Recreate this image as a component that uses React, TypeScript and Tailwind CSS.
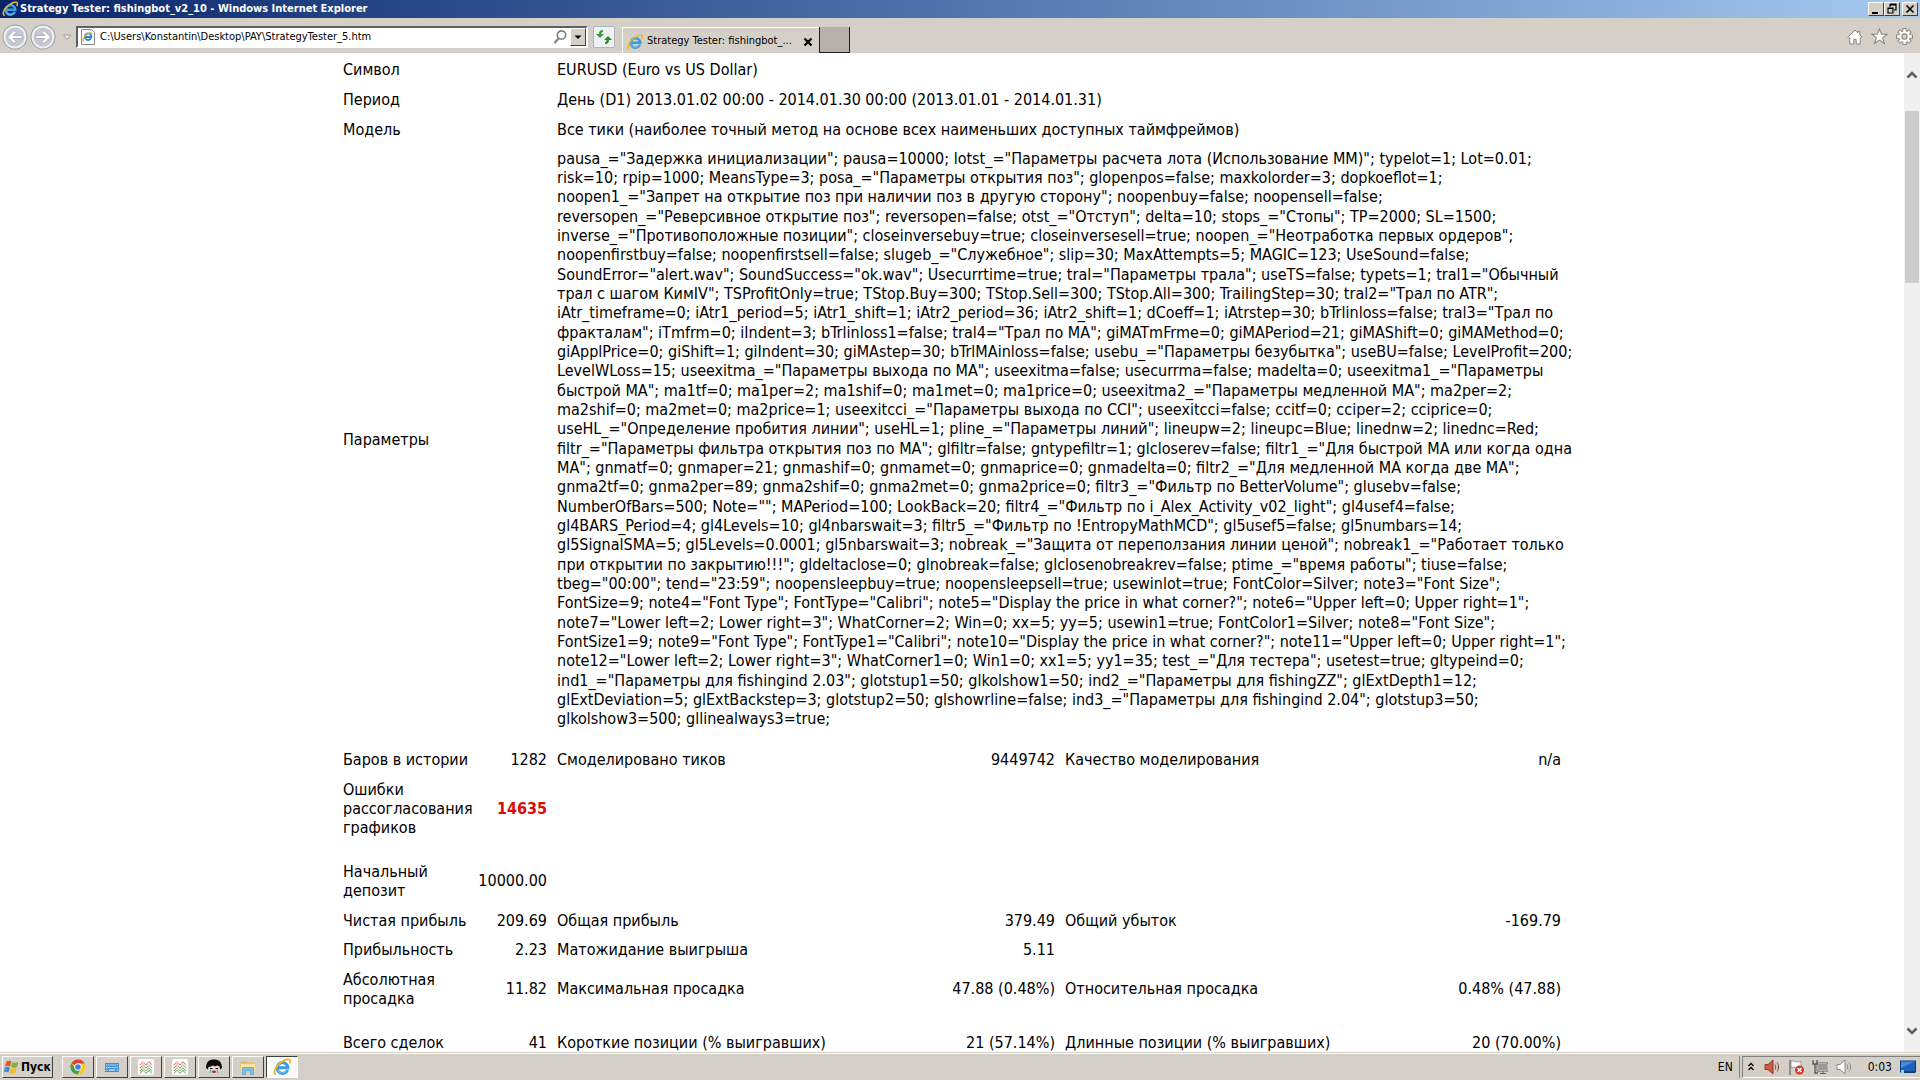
import type { ReactNode } from "react";

const params = [
  'pausa_="Задержка инициализации"; pausa=10000; lotst_="Параметры расчета лота (Использование MM)"; typelot=1; Lot=0.01;',
  'risk=10; rpip=1000; MeansType=3; posa_="Параметры открытия поз"; glopenpos=false; maxkolorder=3; dopkoeflot=1;',
  'noopen1_="Запрет на открытие поз при наличии поз в другую сторону"; noopenbuy=false; noopensell=false;',
  'reversopen_="Реверсивное открытие поз"; reversopen=false; otst_="Отступ"; delta=10; stops_="Стопы"; TP=2000; SL=1500;',
  'inverse_="Противоположные позиции"; closeinversebuy=true; closeinversesell=true; noopen_="Неотработка первых ордеров";',
  'noopenfirstbuy=false; noopenfirstsell=false; slugeb_="Служебное"; slip=30; MaxAttempts=5; MAGIC=123; UseSound=false;',
  'SoundError="alert.wav"; SoundSuccess="ok.wav"; Usecurrtime=true; tral="Параметры трала"; useTS=false; typets=1; tral1="Обычный',
  'трал с шагом КимIV"; TSProfitOnly=true; TStop.Buy=300; TStop.Sell=300; TStop.All=300; TrailingStep=30; tral2="Трал по ATR";',
  'iAtr_timeframe=0; iAtr1_period=5; iAtr1_shift=1; iAtr2_period=36; iAtr2_shift=1; dCoeff=1; iAtrstep=30; bTrlinloss=false; tral3="Трал по',
  'фракталам"; iTmfrm=0; iIndent=3; bTrlinloss1=false; tral4="Трал по МА"; giMATmFrme=0; giMAPeriod=21; giMAShift=0; giMAMethod=0;',
  'giApplPrice=0; giShift=1; giIndent=30; giMAstep=30; bTrlMAinloss=false; usebu_="Параметры безубытка"; useBU=false; LevelProfit=200;',
  'LevelWLoss=15; useexitma_="Параметры выхода по МА"; useexitma=false; usecurrma=false; madelta=0; useexitma1_="Параметры',
  'быстрой МА"; ma1tf=0; ma1per=2; ma1shif=0; ma1met=0; ma1price=0; useexitma2_="Параметры медленной МА"; ma2per=2;',
  'ma2shif=0; ma2met=0; ma2price=1; useexitcci_="Параметры выхода по CCI"; useexitcci=false; ccitf=0; cciper=2; cciprice=0;',
  'useHL_="Определение пробития линии"; useHL=1; pline_="Параметры линий"; lineupw=2; lineupc=Blue; linednw=2; linednc=Red;',
  'filtr_="Параметры фильтра открытия поз по МА"; glfiltr=false; gntypefiltr=1; glcloserev=false; filtr1_="Для быстрой МА или когда одна',
  'МА"; gnmatf=0; gnmaper=21; gnmashif=0; gnmamet=0; gnmaprice=0; gnmadelta=0; filtr2_="Для медленной МА когда две МА";',
  'gnma2tf=0; gnma2per=89; gnma2shif=0; gnma2met=0; gnma2price=0; filtr3_="Фильтр по BetterVolume"; glusebv=false;',
  'NumberOfBars=500; Note=""; MAPeriod=100; LookBack=20; filtr4_="Фильтр по i_Alex_Activity_v02_light"; gl4usef4=false;',
  'gl4BARS_Period=4; gl4Levels=10; gl4nbarswait=3; filtr5_="Фильтр по !EntropyMathMCD"; gl5usef5=false; gl5numbars=14;',
  'gl5SignalSMA=5; gl5Levels=0.0001; gl5nbarswait=3; nobreak_="Защита от переползания линии ценой"; nobreak1_="Работает только',
  'при открытии по закрытию!!!"; gldeltaclose=0; glnobreak=false; glclosenobreakrev=false; ptime_="время работы"; tiuse=false;',
  'tbeg="00:00"; tend="23:59"; noopensleepbuy=true; noopensleepsell=true; usewinlot=true; FontColor=Silver; note3="Font Size";',
  'FontSize=9; note4="Font Type"; FontType="Calibri"; note5="Display the price in what corner?"; note6="Upper left=0; Upper right=1";',
  'note7="Lower left=2; Lower right=3"; WhatCorner=2; Win=0; xx=5; yy=5; usewin1=true; FontColor1=Silver; note8="Font Size";',
  'FontSize1=9; note9="Font Type"; FontType1="Calibri"; note10="Display the price in what corner?"; note11="Upper left=0; Upper right=1";',
  'note12="Lower left=2; Lower right=3"; WhatCorner1=0; Win1=0; xx1=5; yy1=35; test_="Для тестера"; usetest=true; gltypeind=0;',
  'ind1_="Параметры для fishingind 2.03"; glotstup1=50; glkolshow1=50; ind2_="Параметры для fishingZZ"; glExtDepth1=12;',
  'glExtDeviation=5; glExtBackstep=3; glotstup2=50; glshowrline=false; ind3_="Параметры для fishingind 2.04"; glotstup3=50;',
  'glkolshow3=500; gllinealways3=true;',
];

const raised = "border border-t-white border-l-white border-r-[#404040] border-b-[#404040] bg-[#d4d0c8]";

function IeLogo({ className }: { className: string }) {
  return (
    <svg viewBox="0 0 16 16" className={className} aria-hidden="true">
      <path d="M13 10.600A4.800 4.800 0 1 1 13.300 8.700H5" fill="none" stroke="#3d9be0" strokeWidth="2.600" />
      <path d="M12.200 11A4.400 4.400 0 0 1 4 10" fill="none" stroke="#7cc4f2" strokeWidth="0.800" />
      <path d="M2.600 14.600C-.4 13 2 7.600 7 4c4-3 8-3.800 8.400-1.600.2.900-.2 1.800-.8 2.600" fill="none" stroke="#f2b51d" strokeWidth="1.500" />
    </svg>
  );
}

function NavButton({ label, flip }: { label: string; flip?: boolean }) {
  return (
    <button aria-label={label} className="size-[26px] shrink-0">
      <svg viewBox="0 0 26 26" className={flip ? "size-full rotate-180" : "size-full"}>
        <circle cx="13" cy="13" r="12.500" fill="#9a9da4" />
        <circle cx="13" cy="13" r="11.500" fill="#eef0f4" />
        <circle cx="13" cy="13" r="9.500" fill="#c3c8d2" />
        <path d="M5.500 13l6.500-6.500 2 2-3 3h9v3h-9l3 3-2 2z" fill="#fff" stroke="#a2a8b5" strokeWidth="0.800" />
      </svg>
    </button>
  );
}

function TitleBar() {
  return (
    <header className="flex h-[18px] items-center gap-[2px] bg-linear-to-r from-[#0a246a] to-[#a6caf0] pr-[2px] pl-[2px] text-white">
      <IeLogo className="size-4" />
      <h1 className="flex-1 text-[11px] leading-[18px] font-bold">
        Strategy Tester: fishingbot_v2_10 - Windows Internet Explorer
      </h1>
      <div className="flex text-black">
        <button aria-label="Minimize" className={`h-[14px] w-4 ${raised}`}>
          <svg viewBox="0 0 14 12" className="size-full"><path d="M3 9h6v2H3z" /></svg>
        </button>
        <button aria-label="Restore" className={`h-[14px] w-4 ${raised}`}>
          <svg viewBox="0 0 14 12" className="size-full">
            <path d="M5 1h6v6H9M5 1v3M5 2h6M3 5h5v5H3zM3 5.500h5" fill="none" stroke="#000" strokeWidth="1.200" />
          </svg>
        </button>
        <button aria-label="Close" className={`ml-[2px] h-[14px] w-4 ${raised}`}>
          <svg viewBox="0 0 14 12" className="size-full">
            <path d="M3.500 2.500l7 7M10.500 2.500l-7 7" stroke="#000" strokeWidth="1.700" />
          </svg>
        </button>
      </div>
    </header>
  );
}

function Toolbar() {
  return (
    <div className="flex h-[35px] items-center bg-[#d4d0c8] pt-[2px] pr-[7px] pl-[2px]">
      <nav className="flex items-center gap-[2px]">
        <NavButton label="Back" />
        <NavButton label="Forward" flip />
        <button aria-label="Recent pages" className="mx-[2px] w-[14px]">
          <svg viewBox="0 0 14 10" className="w-full"><path d="M3.500 3h7L7 7.500z" fill="#eee" stroke="#a5a199" /></svg>
        </button>
      </nav>
      <div className="flex h-[22px] w-[512px] items-center border-2 border-t-[#606060] border-r-white border-b-white border-l-[#606060] bg-white pl-[2px]">
        <svg viewBox="0 0 16 16" className="size-4 shrink-0" aria-hidden="true">
          <path d="M1.500.5h10l3 3v12h-13z" fill="#fff" stroke="#8a8a8a" />
          <path d="M11 9.300A3.300 3.300 0 1 1 11.400 8H5" fill="none" stroke="#2b86d6" strokeWidth="1.800" />
          <path d="M3.600 12.500c-2-1.500.6-5.500 4-7.500 2.600-1.500 4.600-1.600 4.400.2" fill="none" stroke="#eab021" strokeWidth="1.200" />
        </svg>
        <input
          aria-label="Address"
          type="text"
          defaultValue="C:\Users\Konstantin\Desktop\PAY\StrategyTester_5.htm"
          className="min-w-0 flex-1 bg-transparent pt-[2px] pl-1 text-[11px] text-black"
        />
        <button aria-label="Search" className="mr-[2px] size-4">
          <svg viewBox="0 0 16 16" className="size-full">
            <circle cx="9.500" cy="6" r="4.200" fill="#fff" stroke="#808080" strokeWidth="1.700" />
            <path d="M6.500 9.500L2.500 14" stroke="#808080" strokeWidth="2.200" />
          </svg>
        </button>
        <button aria-label="Show address list" className={`h-[18px] w-4 ${raised}`}>
          <svg viewBox="0 0 14 16" className="size-full"><path d="M3.500 6.500h7L7 10z" /></svg>
        </button>
      </div>
      <button aria-label="Refresh" className="ml-[5px] h-[22px] w-[22px] rounded-[2px] border border-[#b0b4bc] bg-[#eef0f4]">
        <svg viewBox="0 0 20 20" className="size-full">
          <path d="M9 3c-3 0-4 1.500-4 4H2l4 4 4-4H7.500c0-1.500.2-2 1.500-2z" fill="#3d9c3a" />
          <path d="M11 17c3 0 4-1.500 4-4h3l-4-4-4 4h2.500c0 1.500-.2 2-1.500 2z" fill="#2f8a2c" />
        </svg>
      </button>
      <div className="ml-[7px] flex h-[26px] w-[197px] items-center self-end border-t border-l border-white pt-[2px] pl-1">
        <IeLogo className="size-4 shrink-0" />
        <a href="#report" className="flex-1 pl-1 text-[11px] whitespace-nowrap text-black">
          Strategy Tester: fishingbot_...
        </a>
        <button aria-label="Close tab" className="mr-[6px] size-[10px]">
          <svg viewBox="0 0 10 10" className="size-full"><path d="M1.500 1.500l7 7M8.500 1.500l-7 7" stroke="#000" strokeWidth="2.200" /></svg>
        </button>
      </div>
      <button aria-label="New tab" className="h-[26px] w-[31px] self-end border-r border-b border-l border-[#202020] bg-[#b5b0a8]" />
      <div className="ml-auto flex items-center gap-2">
        <button aria-label="Home" className="size-4">
          <svg viewBox="0 0 16 16" className="size-full">
            <path d="M8 1L.8 8.200l1.200 1.200.8-.6V15h4v-4.500h2.400V15h4V8.800l.8.600 1.200-1.200-2.400-2.400V2.500h-2V4z" fill="#fff" stroke="#8a8781" />
          </svg>
        </button>
        <button aria-label="Favorites" className="size-[17px]">
          <svg viewBox="0 0 16 16" className="size-full">
            <path d="M8 .8l1.900 5h5.300l-4.200 3.300 1.600 5.500L8 11.400l-4.600 3.200L5 9.100.8 5.800h5.300z" fill="#fff" stroke="#8a8781" />
          </svg>
        </button>
        <button aria-label="Tools" className="size-[17px]">
          <svg viewBox="0 0 16 16" className="size-full">
            <path d="M8 0v16M0 8h16M2.500 2.500l11 11M13.500 2.500l-11 11" stroke="#8a8781" strokeWidth="4" />
            <circle cx="8" cy="8" r="5.500" fill="#8a8781" />
            <path d="M8 1v14M1 8h14M3.200 3.200l9.600 9.600M12.800 3.200l-9.600 9.600" stroke="#fff" strokeWidth="2.200" />
            <circle cx="8" cy="8" r="4.900" fill="#fff" />
            <circle cx="8" cy="8" r="2.500" fill="#d4d0c8" stroke="#8a8781" />
          </svg>
        </button>
      </div>
    </div>
  );
}

function Info({ label, children }: { label: string; children: ReactNode }) {
  return (
    <tr className="h-[30px]">
      <th scope="row" colSpan={2} className="px-[5px] text-left font-normal">{label}</th>
      <td colSpan={4} className="px-[5px] whitespace-nowrap">{children}</td>
    </tr>
  );
}

// up to three label / value pairs in one row
function Stats({ cells, height, error }: { cells: string[]; height: string; error?: boolean }) {
  return (
    <tr className={height}>
      {[0, 1, 2, 3, 4, 5].map((i) =>
        i % 2 === 0 ? (
          <td key={i} className={i === 0 ? "pl-[5px]" : "pl-[5px] whitespace-nowrap"}>{cells[i]}</td>
        ) : (
          <td key={i} className={`pr-[5px] text-right whitespace-nowrap ${error ? "font-bold text-[#dd0a0a]" : ""}`}>
            {cells[i]}
          </td>
        )
      )}
    </tr>
  );
}

function Spacer({ height }: { height: string }) {
  return (
    <tr className={height}>
      <td colSpan={6} />
    </tr>
  );
}

function Report() {
  return (
    <table className="mx-auto w-[1228px] table-fixed border-collapse text-[16px] leading-[19px] text-black">
      <colgroup>
        <col className="w-[138px]" />
        <col className="w-[76px]" />
        <col className="w-[338px]" />
        <col className="w-[170px]" />
        <col className="w-[338px]" />
        <col className="w-[168px]" />
      </colgroup>
      <tbody>
        <Info label="Символ">EURUSD (Euro vs US Dollar)</Info>
        <Info label="Период">День (D1) 2013.01.02 00:00 - 2014.01.30 00:00 (2013.01.01 - 2014.01.31)</Info>
        <Info label="Модель">Все тики (наиболее точный метод на основе всех наименьших доступных таймфреймов)</Info>
        <tr className="h-[590px]">
          <th scope="row" colSpan={2} className="px-[5px] text-left font-normal">Параметры</th>
          <td colSpan={4} className="px-[5px] whitespace-nowrap">
            {params.map((line, i) => (
              <span key={i} className="block nth-[3n]:leading-[20px]">{line}</span>
            ))}
          </td>
        </tr>
        <Spacer height="h-[10px]" />
        <Stats height="h-[30px]" cells={["Баров в истории", "1282", "Смоделировано тиков", "9449742", "Качество моделирования", "n/a"]} />
        <Stats height="h-[68px]" cells={["Ошибки рассогласования графиков", "14635"]} error />
        <Spacer height="h-[14px]" />
        <Stats height="h-[49px]" cells={["Начальный депозит", "10000.00"]} />
        <Stats height="h-[30px]" cells={["Чистая прибыль", "209.69", "Общая прибыль", "379.49", "Общий убыток", "-169.79"]} />
        <Stats height="h-[29px]" cells={["Прибыльность", "2.23", "Матожидание выигрыша", "5.11"]} />
        <Stats height="h-[49px]" cells={["Абсолютная просадка", "11.82", "Максимальная просадка", "47.88 (0.48%)", "Относительная просадка", "0.48% (47.88)"]} />
        <Spacer height="h-[14px]" />
        <Stats height="h-[30px]" cells={["Всего сделок", "41", "Короткие позиции (% выигравших)", "21 (57.14%)", "Длинные позиции (% выигравших)", "20 (70.00%)"]} />
      </tbody>
    </table>
  );
}

function ScrollBar() {
  return (
    <div className="flex w-4 shrink-0 flex-col items-center bg-[#f0f0f0] pt-[15px] pb-3">
      <button aria-label="Scroll up" className="h-[14px] w-4">
        <svg viewBox="0 0 16 14" className="size-full"><path d="M3.500 9.500L8 5l4.500 4.500" fill="none" stroke="#606060" strokeWidth="2.600" /></svg>
      </button>
      <div className="mt-[29px] h-[172px] w-[14px] bg-[#cdcdcd]" />
      <button aria-label="Scroll down" className="mt-auto h-[18px] w-4">
        <svg viewBox="0 0 16 14" className="size-full"><path d="M3.500 4.500L8 9l4.500-4.500" fill="none" stroke="#606060" strokeWidth="2.600" /></svg>
      </button>
    </div>
  );
}

function MarketIcon() {
  return (
    <svg viewBox="0 0 16 16" className="size-4">
      <rect width="16" height="16" rx="2" fill="#fff" />
      <path d="M2 6l3-3 3 3 3-3 3 3M2 9l3-3 3 3" fill="none" stroke="#dc6a58" strokeWidth="1.200" strokeDasharray="1.200 .6" />
      <path d="M8 9l3-3 3 3M2 12l3-3 3 3 3-3 3 3M2 14.500l3-3 3 3 3-3 3 3" fill="none" stroke="#6fa566" strokeWidth="1.200" strokeDasharray="1.200 .6" />
    </svg>
  );
}

const tasks: { name: string; icon: ReactNode }[] = [
  {
    name: "Chrome",
    icon: (
      <svg viewBox="0 0 16 16" className="size-4">
        <circle cx="8" cy="8" r="7.500" fill="#f6c927" />
        <path d="M8 8L1.500 4.200A7.500 7.500 0 0 1 14.600 4.500H8z" fill="#dc4335" />
        <path d="M1.500 4.200A7.500 7.500 0 0 0 7.500 15.500L11 9.500 8 8 5 9.500z" fill="#3fa04f" />
        <circle cx="8" cy="8" r="3.700" fill="#fff" />
        <circle cx="8" cy="8" r="2.800" fill="#3f7fe0" />
      </svg>
    ),
  },
  {
    name: "Keyboard",
    icon: (
      <svg viewBox="0 0 16 16" className="size-4">
        <rect x="1" y="4" width="14" height="9" fill="#3f8fd0" />
        <path d="M2 6h12M2 8.500h12" stroke="#fff" strokeWidth="1.200" strokeDasharray="1.300 .8" />
        <path d="M2 11h1.500M5 11h6M12.500 11H14" stroke="#fff" strokeWidth="1.200" />
      </svg>
    ),
  },
  { name: "Terminal 1", icon: <MarketIcon /> },
  { name: "Terminal 2", icon: <MarketIcon /> },
  {
    name: "Messenger",
    icon: (
      <svg viewBox="0 0 16 16" className="size-4">
        <ellipse cx="8" cy="9.500" rx="6.500" ry="5.500" fill="#f3d9cf" />
        <path d="M0 9C0 3 3 .5 8 .5S16 3 16 9l-2 1.500-.5-3-2.500-1-2 1-2-1-2 1-2.500.5L2 10.500z" fill="#0d0b0c" />
        <path d="M4 9.500h2.500M9.500 9.500H12" stroke="#111" strokeWidth="1.200" />
        <path d="M4.500 10.500V14M11.500 10.500V14" stroke="#54aadb" strokeWidth="1.500" />
        <ellipse cx="8" cy="12.800" rx="2" ry="1.300" fill="#b9252c" />
      </svg>
    ),
  },
  {
    name: "Explorer",
    icon: (
      <svg viewBox="0 0 16 16" className="size-4">
        <path d="M.5 2h6l1.500 1.500h7V13H.5z" fill="#e6c15c" />
        <path d="M1 5h14v8H1z" fill="#f8e39a" />
        <path d="M2.500 8.500h11v7h-3v-3.500h-5v3.500h-3z" fill="#7cc0e8" stroke="#4c94c4" strokeWidth=".6" />
      </svg>
    ),
  },
  { name: "Internet Explorer", icon: <IeLogo className="size-[18px]" /> },
];

function SpeakerIcon({ fill, line }: { fill: string; line: string }) {
  return (
    <svg viewBox="0 0 16 16" className="size-4" aria-hidden="true">
      <path d="M1 5.500h3L9 1v14l-5-4.500H1z" fill={fill} stroke={line} />
      <path d="M11 5.500c1 1.500 1 3.500 0 5M13 3.500c2 2.500 2 6.500 0 9" fill="none" stroke={line} />
    </svg>
  );
}

function TaskBar() {
  return (
    <footer className="flex h-7 shrink-0 items-center border-t border-[#d4d0c8] bg-[#d4d0c8] pl-[2px] text-[12px] text-black shadow-[inset_0_1px_0_#fff]">
      <button className={`flex h-[22px] w-[51px] items-center gap-px pl-px font-bold ${raised}`}>
        <svg viewBox="0 0 16 16" className="size-4 shrink-0" aria-hidden="true">
          <path d="M2.500 2.500c2-1.200 3.500-1 5 0L6 7.500c-1.500-1-3-1-5 0z" fill="#e5532d" />
          <path d="M8.500 3c1.500 1 3.500 1 6 0L13 8c-2 1-4 1-6 0z" fill="#7cb342" />
          <path d="M.8 8.500c2-1.200 3.500-1 5 0l-1.400 5c-1.500-1-3-1-4.400-.3z" fill="#3c8ad8" />
          <path d="M6.700 9c1.500 1 3.500 1 6 0l-1.500 5c-2 1-4 1-6 0z" fill="#f5bd28" />
        </svg>
        Пуск
      </button>
      <div className="ml-[9px] flex gap-[2px]">
        {tasks.map((task, i) => (
          <button
            key={task.name}
            aria-label={task.name}
            className={
              i === tasks.length - 1
                ? "flex h-[22px] w-8 items-center justify-center border border-t-[#404040] border-r-white border-b-white border-l-[#404040] bg-[#fafafa]"
                : `flex h-[22px] w-8 items-center justify-center ${raised}`
            }
          >
            {task.icon}
          </button>
        ))}
      </div>
      <span className="ml-auto pr-[6px]">EN</span>
      <div className="h-[22px] w-px bg-[#808080]" />
      <div className="ml-[2px] flex h-[22px] items-center gap-2 border border-t-[#808080] border-r-0 border-b-white border-l-[#808080] pr-1 pl-[3px]">
        <button aria-label="Show hidden icons" className="w-[10px]">
          <svg viewBox="0 0 10 12" className="w-full"><path d="M2.500 5L5 2.500 7.500 5M2.500 9L5 6.500 7.500 9" fill="none" stroke="#000" strokeWidth="1.300" /></svg>
        </button>
        <SpeakerIcon fill="#cf5b40" line="#8e3a2a" />
        <svg viewBox="0 0 16 16" className="size-4" aria-hidden="true">
          <path d="M2 1v15" stroke="#777" strokeWidth="1.500" />
          <path d="M3 2c3-1 5 2 10 .5v6C9 10 6 7 3 8.500z" fill="#fff" stroke="#888" strokeWidth=".8" />
          <circle cx="11.500" cy="11" r="4.500" fill="#d8352c" />
          <path d="M9.500 9l4 4M13.500 9l-4 4" stroke="#fff" strokeWidth="1.500" />
        </svg>
        <svg viewBox="0 0 16 16" className="size-4" aria-hidden="true">
          <path d="M5.500 4.500h10v7h-10z" fill="#9b9b9b" stroke="#fff" />
          <path d="M5 4h11v8H5zM8 14.500h6M11 12v2.500" fill="none" stroke="#555" strokeWidth=".9" />
          <path d="M1 1v4h4V1M3 5v9h3" fill="none" stroke="#555" strokeWidth="1.300" />
        </svg>
        <SpeakerIcon fill="#fff" line="#8a8781" />
        <time className="ml-2">0:03</time>
        <button aria-label="Show desktop" className="size-4">
          <svg viewBox="0 0 16 16" className="size-full">
            <rect x=".5" y="2" width="15" height="11" fill="#1d62b5" stroke="#0d3d80" />
            <path d="M1 2.500h14L1 9z" fill="#3f8bdd" />
            <path d="M1 12.500h14V14H1z" fill="#123a70" />
            <path d="M1 11h3v3H1z" fill="#8fd0ee" />
          </svg>
        </button>
      </div>
    </footer>
  );
}

export default function App() {
  return (
    <div className="flex h-screen flex-col overflow-hidden bg-white font-['DejaVu_Sans_Condensed','Noto_Sans',sans-serif]">
      <TitleBar />
      <Toolbar />
      <div className="flex min-h-0 flex-1">
        <main id="report" className="min-w-0 flex-1 overflow-hidden pt-px">
          <Report />
        </main>
        <ScrollBar />
      </div>
      <TaskBar />
    </div>
  );
}
